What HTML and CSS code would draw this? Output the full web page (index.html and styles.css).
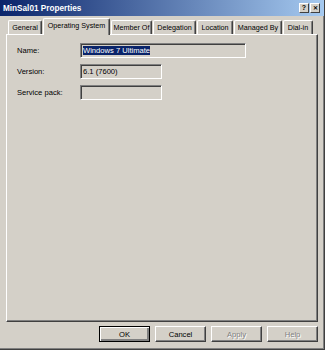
FILE: index.html
```html
<!DOCTYPE html>
<html lang="en">
<head>
    <meta charset="UTF-8">
    <title>MinSal01 Properties</title>
    <link rel="stylesheet" href="styles.css">
</head>
<body>
    <div class="window">
        <div class="titlebar">
            <span class="title">MinSal01 Properties</span>
            <div class="caption-buttons">
                <span class="caption-btn">?</span>
                <span class="caption-btn close">&#x2715;</span>
            </div>
        </div>

        <div class="tabs">
            <div class="tab">General</div>
            <div class="tab active">Operating System</div>
            <div class="tab">Member Of</div>
            <div class="tab">Delegation</div>
            <div class="tab">Location</div>
            <div class="tab">Managed By</div>
            <div class="tab">Dial-in</div>
        </div>

        <div class="panel">
            <div class="form">
                <label>Name:</label>
                <div class="field wide"><span class="selected">Windows 7 Ultimate</span></div>
                <label>Version:</label>
                <div class="field">6.1 (7600)</div>
                <label>Service pack:</label>
                <div class="field"></div>
            </div>
        </div>

        <div class="buttons">
            <button class="button default">OK</button>
            <button class="button">Cancel</button>
            <button class="button" disabled>Apply</button>
            <button class="button" disabled>Help</button>
        </div>
    </div>
</body>
</html>
```

FILE: styles.css
```css
:root {
    --face: #d4d0c8;
    --shadow: #808080;
    --dark: #404040;
    --light: #ffffff;
    --select: #0a246a;
}

body {
    margin: 0;
    font-family: "Liberation Sans", Arial, sans-serif;
    font-size: 7.6px;
    color: #000;
    background-color: var(--face);
}

.window {
    width: 325px;
    height: 350px;
    box-sizing: border-box;
    background-color: var(--face);
    border-right: 1px solid var(--dark);
    border-bottom: 1px solid var(--dark);
    box-shadow: inset -1px -1px 0 var(--shadow);
}

.titlebar {
    height: 16px;
    padding: 0 4px 0 3px;
    display: flex;
    justify-content: space-between;
    align-items: center;
    background: linear-gradient(to right, #0a246a, #a6caf0);
    color: white;
}

.title {
    font-weight: bold;
    font-size: 8.2px;
}

.caption-buttons {
    display: flex;
    margin-top: -1px;
}

.caption-btn {
    width: 10px;
    height: 10px;
    box-sizing: border-box;
    background-color: var(--face);
    border-top: 1px solid var(--light);
    border-left: 1px solid var(--light);
    border-right: 1px solid var(--dark);
    border-bottom: 1px solid var(--dark);
    color: #000;
    font-weight: bold;
    font-size: 7px;
    line-height: 8px;
    text-align: center;
}

.caption-btn.close {
    margin-left: 1px;
    font-size: 6px;
}

.tabs {
    display: flex;
    align-items: flex-end;
    gap: 1px;
    margin: 2px 0 0 8px;
    position: relative;
    z-index: 1;
}

.tab {
    height: 14px;
    box-sizing: border-box;
    font-size: 7.2px;
    line-height: 13px;
    text-align: center;
    color: #000;
    border-top: 1px solid var(--light);
    border-left: 1px solid var(--light);
    border-right: 1px solid var(--dark);
    border-radius: 2px 2px 0 0;
    box-shadow: inset -1px 0 0 var(--shadow);
    white-space: nowrap;
}

.tab:nth-child(1) { width: 34px; }
.tab:nth-child(2) { width: 67px; }
.tab:nth-child(3) { width: 41px; }
.tab:nth-child(4) { width: 43px; }
.tab:nth-child(5) { width: 36px; }
.tab:nth-child(6) { width: 48px; }
.tab:nth-child(7) { width: 30px; }

.tab.active {
    height: 17px;
    margin-bottom: -1px;
    line-height: 14px;
    background-color: var(--face);
}

.panel {
    height: 288px;
    margin: 0 6px;
    box-sizing: border-box;
    border-top: 1px solid var(--light);
    border-left: 1px solid var(--light);
    border-right: 1px solid var(--dark);
    border-bottom: 1px solid var(--dark);
    box-shadow: inset -1px -1px 0 var(--shadow);
}

.form {
    display: grid;
    grid-template-columns: 63px auto;
    row-gap: 6px;
    align-items: center;
    justify-items: start;
    padding: 8px 0 0 10px;
}

.field {
    width: 82px;
    height: 15px;
    box-sizing: border-box;
    padding: 1px 0 0 2px;
    line-height: 11px;
    border-top: 1px solid var(--shadow);
    border-left: 1px solid var(--shadow);
    border-right: 1px solid var(--light);
    border-bottom: 1px solid var(--light);
    box-shadow: inset 1px 1px 0 var(--dark), inset -1px -1px 0 var(--face);
}

.field.wide {
    width: 166px;
}

.selected {
    background-color: var(--select);
    color: white;
}

.buttons {
    display: flex;
    justify-content: flex-end;
    gap: 5px;
    padding: 4px 6px 0 0;
}

.button {
    width: 51px;
    height: 16px;
    padding: 0;
    font-family: inherit;
    font-size: inherit;
    color: #000;
    background-color: var(--face);
    border-top: 1px solid var(--light);
    border-left: 1px solid var(--light);
    border-right: 1px solid var(--dark);
    border-bottom: 1px solid var(--dark);
    box-shadow: inset -1px -1px 0 var(--shadow);
}

.button.default {
    border: 1px solid #000;
    box-shadow: inset 1px 1px 0 var(--light), inset -2px -2px 0 var(--shadow), inset -1px -1px 0 var(--dark);
}

.button:disabled {
    color: var(--shadow);
    text-shadow: 1px 1px 0 var(--light);
}
```
